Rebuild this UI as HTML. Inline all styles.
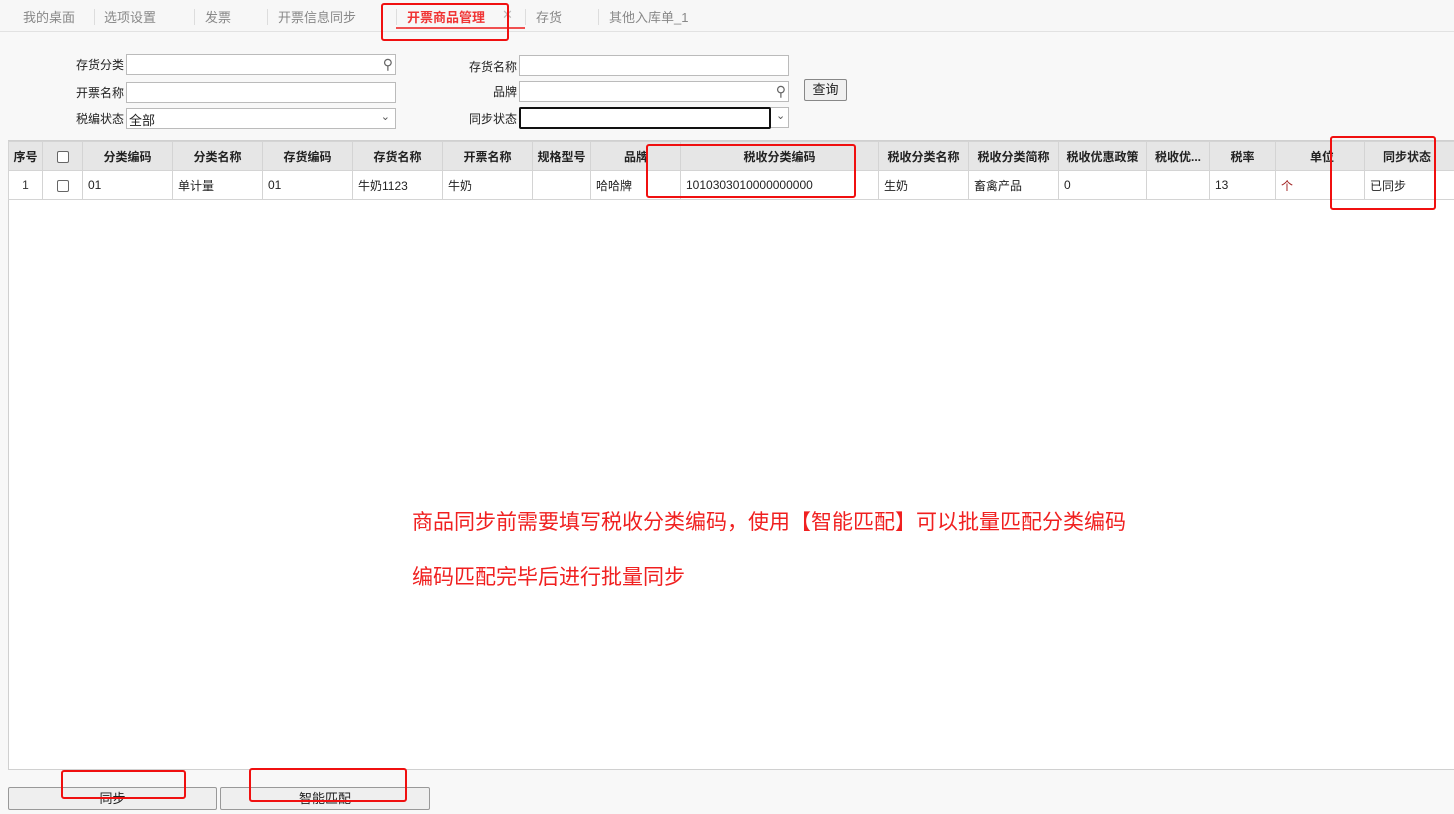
<!DOCTYPE html>
<html><head><meta charset="utf-8">
<style>
*{margin:0;padding:0;box-sizing:border-box}
body{width:1454px;height:814px;background:#f8f8f8;font-family:"Liberation Sans","Noto Sans CJK SC",sans-serif;font-size:12px;color:#222;position:relative;overflow:hidden}
.a{position:absolute}
.tab{position:absolute;top:7px;font-size:13px;color:#888}
.sep{position:absolute;top:9px;width:1px;height:16px;background:#ddd}
.lbl{position:absolute;font-size:12px;color:#222;text-align:right;width:80px}
.inp{position:absolute;height:21px;background:#fff;border:1px solid #bbb}
.rb{position:absolute;border:2px solid #f01010;border-radius:3px}
table{border-collapse:collapse;position:absolute;left:8px;top:141px;table-layout:fixed;width:1452px}
td{border:1px solid #d4d4d4;height:29px;font-size:12px;padding:0 5px;white-space:nowrap;overflow:hidden}
tr.h td{background:#e6e6e6;font-weight:bold;text-align:center;color:#222}
.cb{display:inline-block;width:12px;height:12px;border:1px solid #666;border-radius:2px;background:#fff;vertical-align:middle}
.btn{position:absolute;top:787px;height:23px;border:1px solid #999;border-radius:2px;background:#efefef;text-align:center;font-size:13px;line-height:21px}
.red{position:absolute;left:412px;color:#f02020;font-size:21px;font-family:"Liberation Sans","Noto Sans CJK SC",sans-serif}
</style></head><body>
<div class="a" style="left:0;top:0;width:1454px;height:32px;background:#f7f7f7;border-bottom:1px solid #e2e2e2"></div>
<div class="tab" style="left:23px">我的桌面</div>
<div class="sep" style="left:94px"></div>
<div class="tab" style="left:104px">选项设置</div>
<div class="sep" style="left:194px"></div>
<div class="tab" style="left:205px">发票</div>
<div class="sep" style="left:267px"></div>
<div class="tab" style="left:278px">开票信息同步</div>
<div class="sep" style="left:396px"></div>
<div class="tab" style="left:407px;color:#f03535;font-weight:bold">开票商品管理</div>
<div class="tab" style="left:502px;color:#bbb">✕</div>
<div class="a" style="left:396px;top:27px;width:129px;height:2px;background:#f05050"></div>
<div class="sep" style="left:525px"></div>
<div class="tab" style="left:536px">存货</div>
<div class="sep" style="left:598px"></div>
<div class="tab" style="left:609px">其他入库单_1</div>

<div class="lbl" style="left:44px;top:56px">存货分类</div>
<div class="inp" style="left:126px;top:54px;width:270px"><span class="a" style="right:2px;top:1px;font-size:14px;color:#666">⚲</span></div>
<div class="lbl" style="left:44px;top:84px">开票名称</div>
<div class="inp" style="left:126px;top:82px;width:270px"></div>
<div class="lbl" style="left:44px;top:110px">税编状态</div>
<div class="inp" style="left:126px;top:108px;width:270px;font-size:13px;padding:1px 2px">全部<span class="a" style="right:5px;top:1px;color:#555;font-size:11px">⌄</span></div>
<div class="lbl" style="left:437px;top:58px">存货名称</div>
<div class="inp" style="left:519px;top:55px;width:270px"></div>
<div class="lbl" style="left:437px;top:83px">品牌</div>
<div class="inp" style="left:519px;top:81px;width:270px"><span class="a" style="right:2px;top:1px;font-size:14px;color:#666">⚲</span></div>
<div class="lbl" style="left:437px;top:110px">同步状态</div>
<div class="inp" style="left:519px;top:107px;width:270px"></div>
<div class="a" style="left:519px;top:107px;width:252px;height:22px;border:2px solid #111;border-radius:2px;background:#fff"></div>
<span class="a" style="left:776px;top:109px;color:#555;font-size:11px">⌄</span>
<div class="a" style="left:804px;top:79px;width:43px;height:22px;border:1px solid #888;border-radius:2px;background:#f0f0f0;font-size:13px;text-align:center;line-height:20px">查询</div>

<div class="a" style="left:8px;top:140px;width:1450px;height:630px;background:#fff;border:1px solid #d0d0d0"></div>
<table>
<colgroup><col style="width:34px"><col style="width:40px"><col style="width:90px"><col style="width:90px"><col style="width:90px"><col style="width:90px"><col style="width:90px"><col style="width:58px"><col style="width:90px"><col style="width:198px"><col style="width:90px"><col style="width:90px"><col style="width:88px"><col style="width:63px"><col style="width:66px"><col style="width:89px"><col style="width:96px"></colgroup>
<tr class="h"><td style="padding:0 2px">序号</td><td><span class="cb"></span></td><td>分类编码</td><td>分类名称</td><td>存货编码</td><td>存货名称</td><td>开票名称</td><td style="padding:0 2px">规格型号</td><td style="text-align:right;padding-right:32px">品牌</td><td>税收分类编码</td><td style="padding:0 2px">税收分类名称</td><td style="padding:0 2px">税收分类简称</td><td style="padding:0 2px">税收优惠政策</td><td style="padding:0 1px">税收优...</td><td>税率</td><td style="text-align:right;padding-right:30px">单位</td><td style="text-align:left;padding-left:18px">同步状态</td></tr>
<tr><td style="text-align:center;color:#333">1</td><td style="text-align:center"><span class="cb"></span></td><td>01</td><td>单计量</td><td>01</td><td>牛奶1123</td><td>牛奶</td><td></td><td>哈哈牌</td><td>1010303010000000000</td><td>生奶</td><td>畜禽产品</td><td>0</td><td></td><td>13</td><td style="color:#a02020">个</td><td>已同步</td></tr>
</table>

<div class="red" style="top:506px">商品同步前需要填写税收分类编码，使用【智能匹配】可以批量匹配分类编码</div>
<div class="red" style="top:561px">编码匹配完毕后进行批量同步</div>

<div class="btn" style="left:8px;width:209px">同步</div>
<div class="btn" style="left:220px;width:210px">智能匹配</div>

<div class="rb" style="left:381px;top:3px;width:128px;height:38px"></div>
<div class="rb" style="left:646px;top:144px;width:210px;height:54px"></div>
<div class="rb" style="left:1330px;top:136px;width:106px;height:74px"></div>
<div class="rb" style="left:61px;top:770px;width:125px;height:29px"></div>
<div class="rb" style="left:249px;top:768px;width:158px;height:34px"></div>
</body></html>
